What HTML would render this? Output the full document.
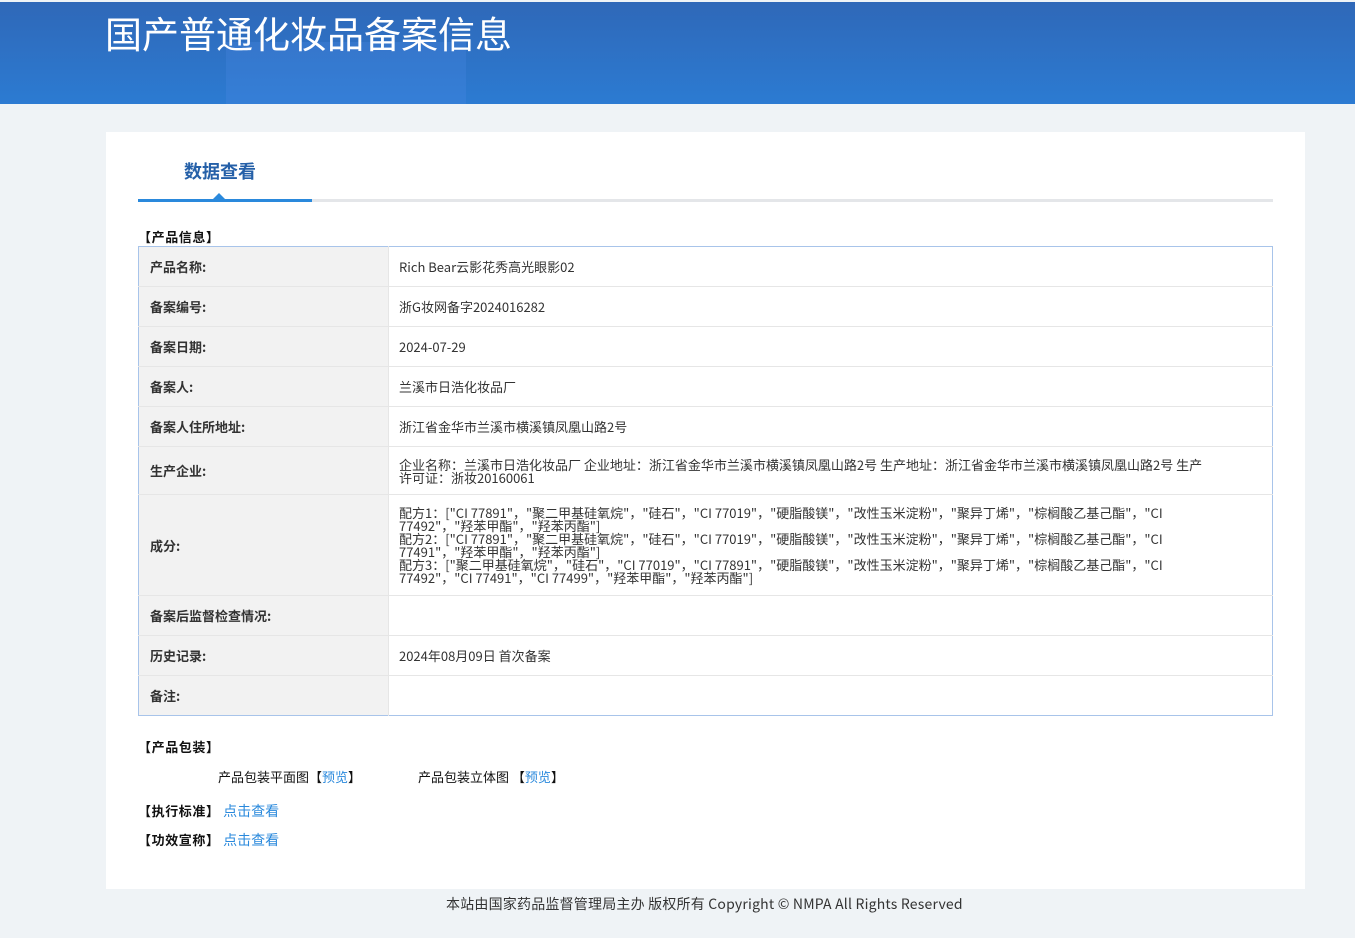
<!DOCTYPE html>
<html><head><meta charset="utf-8"><style>
*{margin:0;padding:0;box-sizing:border-box}
body{width:1355px;height:938px;background:#eff3f6;font-family:"Noto Sans CJK SC","Liberation Sans",sans-serif;position:relative;overflow:hidden;color:#333}
.hdr{position:absolute;left:0;top:2px;width:1355px;height:102px;background:linear-gradient(180deg,#2f68b8 0%,#2c7bd2 100%);overflow:hidden}
.hdr .b1{position:absolute;left:226px;top:40px;width:240px;height:70px;background:rgba(80,140,230,.25)}
.hdr h1{position:absolute;left:105px;top:5px;font-size:37px;font-weight:normal;color:#fff;line-height:50px}
.card{position:absolute;left:106px;top:132px;width:1199px;height:757px;background:#fff}
.tab{position:absolute;left:78px;top:26px;font-size:18px;font-weight:bold;color:#2560a8}
.line{position:absolute;left:32px;top:67px;width:1135px;height:3px;background:#e4e6e9}
.line i{position:absolute;left:0;top:0;width:174px;height:3px;background:#2a89dc}
.tri{position:absolute;left:107px;top:61px;width:0;height:0;border-left:6px solid transparent;border-right:6px solid transparent;border-bottom:6px solid #2a89dc}
.sec{position:absolute;font-size:13px;font-weight:bold;color:#111;line-height:18px;letter-spacing:0.6px}
table{position:absolute;left:32px;top:114px;width:1135px;border-collapse:collapse;border:1px solid #a8c4ea;font-size:13px}
td{border-bottom:1px solid #e6e6e6;height:40px;vertical-align:middle}
td.l{width:250px;background:#f2f2f2;font-weight:bold;color:#333;padding-left:11px;border-right:1px solid #e6e6e6}
td.v{padding:0 55px 0 10px;color:#333;line-height:13px}
a{color:#2a89dc;text-decoration:none}
.foot{position:absolute;left:446px;top:894px;white-space:nowrap;font-size:14px;color:#333;letter-spacing:0.2px}
</style></head><body>
<div class="hdr"><div class="b1"></div><h1>国产普通化妆品备案信息</h1></div>
<div class="card">
<div class="tab">数据查看</div>
<div class="line"><i></i></div><div class="tri"></div>
<div class="sec" style="left:32px;top:96px">【产品信息】</div>
<table>
<tr><td class="l">产品名称:</td><td class="v">Rich Bear云影花秀高光眼影02</td></tr>
<tr><td class="l">备案编号:</td><td class="v">浙G妆网备字2024016282</td></tr>
<tr><td class="l">备案日期:</td><td class="v">2024-07-29</td></tr>
<tr><td class="l">备案人:</td><td class="v">兰溪市日浩化妆品厂</td></tr>
<tr><td class="l">备案人住所地址:</td><td class="v">浙江省金华市兰溪市横溪镇凤凰山路2号</td></tr>
<tr><td class="l" style="height:48px">生产企业:</td><td class="v" style="padding-right:62px">企业名称：兰溪市日浩化妆品厂 企业地址：浙江省金华市兰溪市横溪镇凤凰山路2号 生产地址：浙江省金华市兰溪市横溪镇凤凰山路2号 生产许可证：浙妆20160061</td></tr>
<tr><td class="l" style="height:101px">成分:</td><td class="v" style="padding-right:88px">配方1：["CI 77891"，"聚二甲基硅氧烷"，"硅石"，"CI 77019"，"硬脂酸镁"，"改性玉米淀粉"，"聚异丁烯"，"棕榈酸乙基己酯"，"CI 77492"，"羟苯甲酯"，"羟苯丙酯"]<br>配方2：["CI 77891"，"聚二甲基硅氧烷"，"硅石"，"CI 77019"，"硬脂酸镁"，"改性玉米淀粉"，"聚异丁烯"，"棕榈酸乙基己酯"，"CI 77491"，"羟苯甲酯"，"羟苯丙酯"]<br>配方3：["聚二甲基硅氧烷"，"硅石"，"CI 77019"，"CI 77891"，"硬脂酸镁"，"改性玉米淀粉"，"聚异丁烯"，"棕榈酸乙基己酯"，"CI 77492"，"CI 77491"，"CI 77499"，"羟苯甲酯"，"羟苯丙酯"]</td></tr>
<tr><td class="l">备案后监督检查情况:</td><td class="v"></td></tr>
<tr><td class="l">历史记录:</td><td class="v">2024年08月09日 首次备案</td></tr>
<tr><td class="l" style="border-bottom:none">备注:</td><td class="v" style="border-bottom:none"></td></tr>
</table>
<div class="sec" style="left:32px;top:606px">【产品包装】</div>
<div style="position:absolute;left:112px;top:635px;font-size:13px;color:#111">产品包装平面图【<a>预览</a>】</div>
<div style="position:absolute;left:312px;top:635px;font-size:13px;color:#111">产品包装立体图 【<a>预览</a>】</div>
<div class="sec" style="left:32px;top:670px">【执行标准】 <a style="font-weight:normal;font-size:14px;letter-spacing:0">点击查看</a></div>
<div class="sec" style="left:32px;top:699px">【功效宣称】 <a style="font-weight:normal;font-size:14px;letter-spacing:0">点击查看</a></div>
</div>
<div class="foot">本站由国家药品监督管理局主办 版权所有 Copyright © NMPA All Rights Reserved</div>
</body></html>
